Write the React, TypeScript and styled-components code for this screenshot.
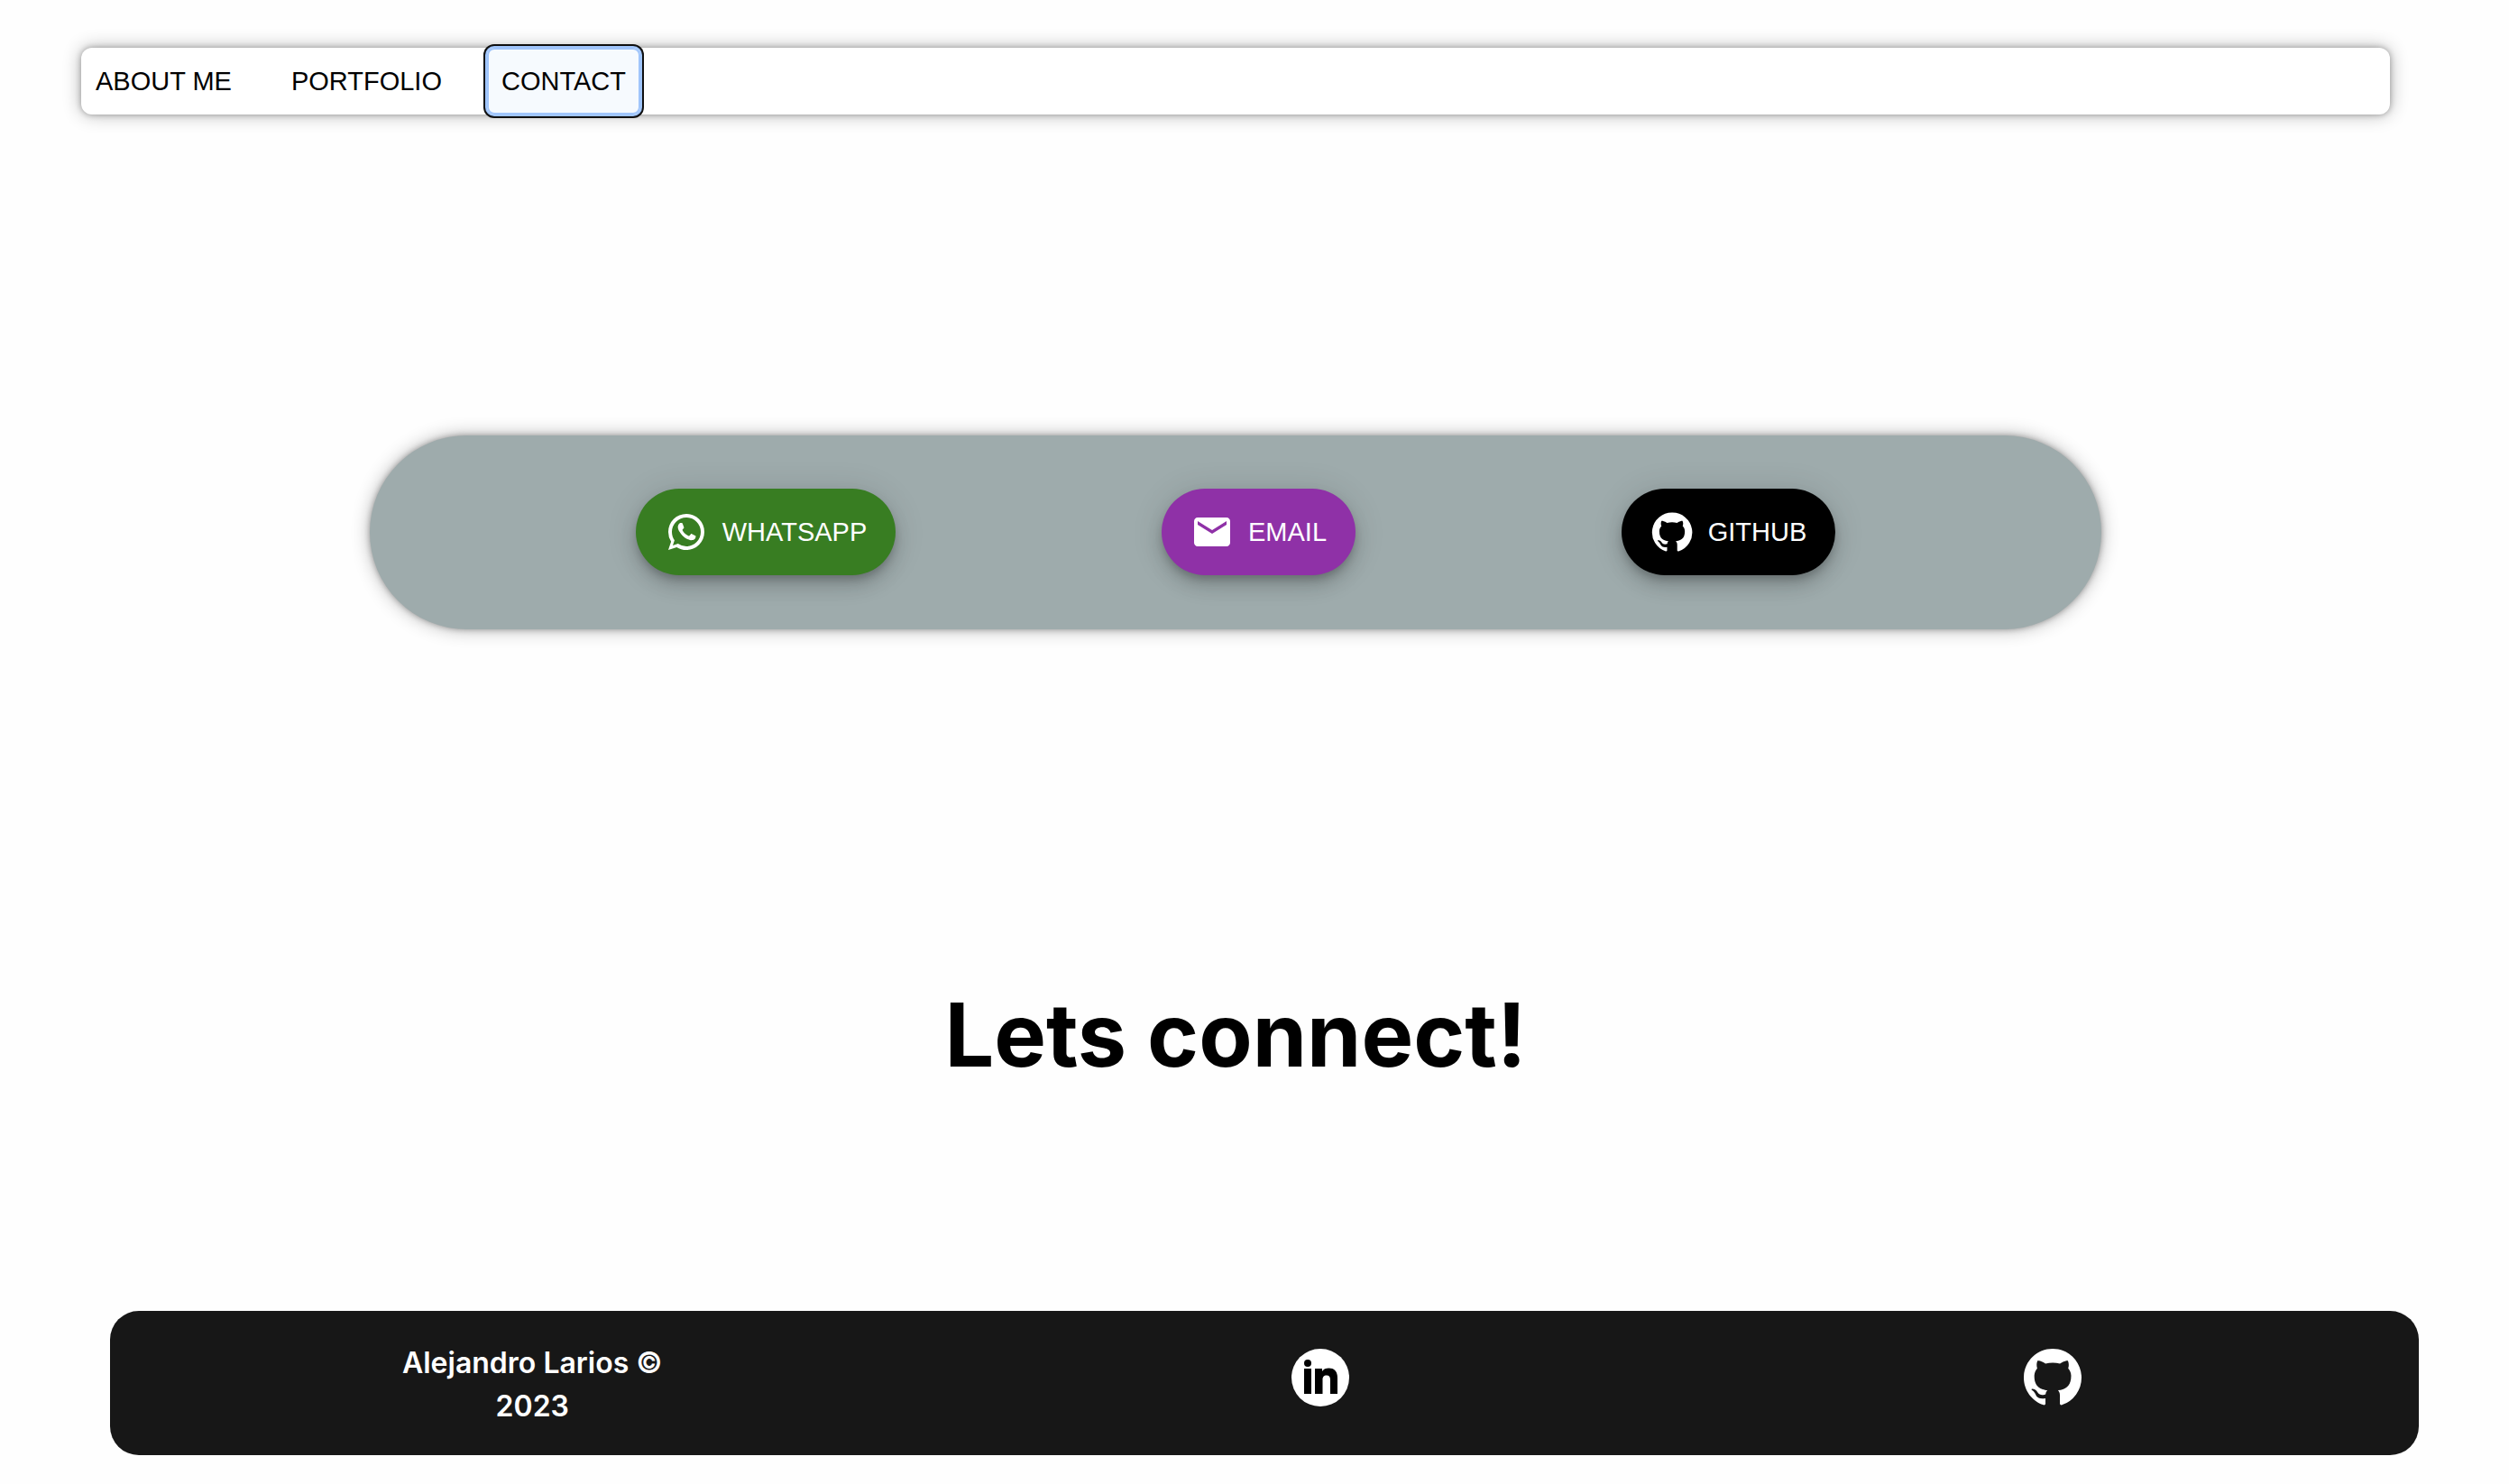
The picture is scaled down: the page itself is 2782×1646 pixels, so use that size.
import React from "react";
import styled, { createGlobalStyle } from "styled-components";

const GlobalStyle = createGlobalStyle`
  *, *::before, *::after { box-sizing: border-box; }
  body {
    margin: 0;
    background: #fefefe;
    color: #000;
    font-family: Inter, "Liberation Sans", sans-serif;
  }
`;

const Page = styled.div`
  display: flex;
  flex-direction: column;
  padding: 53px 132px 32px 90px;
`;

const NavBar = styled.nav`
  display: flex;
  gap: 34px;
  background: #fff;
  border-radius: 12px;
  box-shadow: 0 0 6px rgba(0, 0, 0, 0.3), 0 0 20px rgba(0, 0, 0, 0.3);
`;

const NavButton = styled.button<{ $focused?: boolean }>`
  padding: 12px 16px;
  border: 0;
  border-radius: 8px;
  background: ${(p) => (p.$focused ? "#f6fafe" : "transparent")};
  box-shadow: ${(p) =>
    p.$focused ? "inset 0 0 0 2px #a0c5fb, 0 0 0 2px #a0c5fb, 0 0 0 4px #101010" : "none"};
  color: #000;
  font: 400 29px/50px "Liberation Sans", Arial, sans-serif;
  text-transform: uppercase;
  cursor: pointer;
`;

const ContactPanel = styled.section`
  display: flex;
  justify-content: space-evenly;
  width: 75%;
  margin: 356px auto 0;
  padding: 59px 0 60px;
  border-radius: 108px;
  background: #9eabac;
  box-shadow: 0 0 6px rgba(0, 0, 0, 0.3), 0 0 20px rgba(0, 0, 0, 0.3);
`;

const ContactButton = styled.button<{ $color: string }>`
  display: inline-flex;
  align-items: center;
  gap: 16px;
  height: 96px;
  padding: 0 32px;
  border: 0;
  border-radius: 48px;
  background: ${(p) => p.$color};
  box-shadow: 0 6px 10px -2px rgba(0, 0, 0, 0.2), 0 12px 20px rgba(0, 0, 0, 0.14),
    0 2px 36px rgba(0, 0, 0, 0.12);
  color: #fff;
  font: 400 29px/50px "Liberation Sans", Arial, sans-serif;
  text-transform: uppercase;
  cursor: pointer;
`;

const ButtonIcon = styled.svg`
  width: 48px;
  height: 48px;
  fill: currentColor;
`;

const Title = styled.h1`
  margin: 394px 0 0;
  font-size: 97px;
  font-weight: 700;
  line-height: 112px;
  text-align: center;
`;

const Footer = styled.footer`
  display: grid;
  grid-template-columns: 15fr 13fr 13fr;
  justify-items: center;
  align-items: start;
  margin: 250px -32px 0 32px;
  padding: 34px 0 30px;
  border-radius: 32px;
  background: #171717;
  color: #fff;
`;

const Copyright = styled.p`
  max-width: 320px;
  margin: 0;
  font-size: 32px;
  font-weight: 600;
  line-height: 48px;
  text-align: center;
`;

const SocialLink = styled.a`
  display: flex;
  padding-top: 8px;
  color: #fff;
`;

const SocialIcon = styled.svg`
  width: 64px;
  height: 64px;
  fill: currentColor;
`;

const contacts = [
  {
    label: "WhatsApp",
    color: "#387d22",
    path: "M16.75 13.96c.25.13.41.2.46.3.06.11.04.61-.21 1.18-.2.56-1.24 1.1-1.7 1.12-.46.02-.47.36-2.96-.73-2.49-1.09-3.99-3.75-4.11-3.92-.12-.17-.96-1.38-.92-2.61.05-1.22.69-1.8.95-2.04.24-.26.51-.29.68-.26h.47c.15 0 .36-.06.55.45l.69 1.87c.06.13.1.28.01.44l-.27.41-.39.42c-.12.12-.26.25-.12.5.12.26.62 1.09 1.32 1.78.91.88 1.71 1.17 1.95 1.3.24.14.39.12.54-.04l.81-.94c.19-.25.35-.19.58-.11l1.67.88M12 2a10 10 0 0 1 10 10 10 10 0 0 1-10 10c-1.97 0-3.8-.57-5.35-1.55L2 22l1.55-4.65A9.969 9.969 0 0 1 2 12 10 10 0 0 1 12 2m0 2a8 8 0 0 0-8 8c0 1.72.54 3.31 1.46 4.61L4.5 19.5l2.89-.96A7.95 7.95 0 0 0 12 20a8 8 0 0 0 8-8 8 8 0 0 0-8-8z",
  },
  {
    label: "Email",
    color: "#8f31a7",
    path: "M20 4H4c-1.1 0-1.99.9-1.99 2L2 18c0 1.1.9 2 2 2h16c1.1 0 2-.9 2-2V6c0-1.1-.9-2-2-2zm0 4-8 5-8-5V6l8 5 8-5v2z",
  },
  {
    label: "GitHub",
    color: "#000",
    path: "M12 1.27a11 11 0 00-3.48 21.46c.55.09.73-.28.73-.55v-1.84c-3.03.64-3.67-1.46-3.67-1.46-.55-1.29-1.28-1.65-1.28-1.65-.92-.65.1-.65.1-.65 1.1 0 1.73 1.1 1.73 1.1.92 1.65 2.57 1.2 3.21.92a2 2 0 01.64-1.47c-2.47-.27-5.04-1.19-5.04-5.5 0-1.1.46-2.1 1.2-2.84a3.76 3.76 0 010-2.93s.91-.28 3.11 1.1c1.8-.49 3.7-.49 5.5 0 2.1-1.38 3.02-1.1 3.02-1.1a3.76 3.76 0 01.1 2.93c.83.74 1.2 1.74 1.2 2.94 0 4.21-2.57 5.13-5.04 5.4.45.37.82.92.82 2.02v3.03c0 .27.1.64.73.55A11 11 0 0012 1.27",
  },
];

export default function App() {
  return (
    <>
      <GlobalStyle />
      <Page>
        <NavBar>
          <NavButton>About me</NavButton>
          <NavButton>Portfolio</NavButton>
          <NavButton $focused>Contact</NavButton>
        </NavBar>
        <main>
          <ContactPanel>
            {contacts.map((c) => (
              <ContactButton key={c.label} $color={c.color}>
                <ButtonIcon viewBox="0 0 24 24" aria-hidden="true">
                  <path d={c.path} />
                </ButtonIcon>
                {c.label}
              </ContactButton>
            ))}
          </ContactPanel>
          <Title>Lets connect!</Title>
        </main>
        <Footer>
          <Copyright>Alejandro Larios © 2023</Copyright>
          <SocialLink href="#linkedin" aria-label="LinkedIn">
            <SocialIcon viewBox="0 0 64 64" aria-hidden="true">
              <circle cx="32" cy="32" r="32" />
              <g fill="#000">
                <circle cx="18" cy="16" r="4" />
                <path d="M14 22h8v28h-8zM26 22h8v3c1.500-2.500 4-3.500 7.500-3.500 6.500 0 9.500 4 9.500 11V50h-8V34.500c0-3.500-1.200-5-4-5-3.200 0-4.500 1.500-4.500 5V50H26z" />
              </g>
            </SocialIcon>
          </SocialLink>
          <SocialLink href="#github" aria-label="GitHub">
            <SocialIcon viewBox="0 0 16 16" aria-hidden="true">
              <path d="M8 0C3.580 0 0 3.580 0 8c0 3.540 2.290 6.530 5.470 7.590.4.070.55-.17.55-.38 0-.19-.010-.82-.010-1.490-2.010.37-2.530-.49-2.690-.94-.090-.23-.48-.94-.82-1.130-.28-.15-.68-.52-.010-.53.63-.010 1.080.58 1.230.82.72 1.210 1.870.87 2.330.66.070-.52.28-.87.51-1.070-1.780-.2-3.640-.89-3.640-3.950 0-.87.31-1.590.82-2.150-.080-.2-.36-1.020.080-2.120 0 0 .67-.21 2.200.82.64-.18 1.320-.27 2-.27s1.360.090 2 .27c1.530-1.040 2.200-.82 2.200-.82.44 1.100.16 1.920.080 2.120.51.56.82 1.270.82 2.150 0 3.070-1.870 3.750-3.650 3.950.29.25.54.73.54 1.480 0 1.070-.010 1.930-.010 2.200 0 .21.15.46.55.38A8.013 8.013 0 0016 8c0-4.420-3.580-8-8-8z" />
            </SocialIcon>
          </SocialLink>
        </Footer>
      </Page>
    </>
  );
}
